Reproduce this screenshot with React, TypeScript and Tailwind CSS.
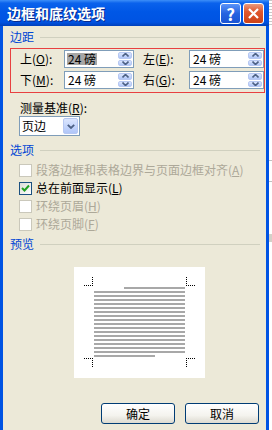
import React from "react";

const font = { fontFamily: '"Noto Sans CJK SC", "Noto Sans", sans-serif' };

function Spinner() {
  return (
    <div className="flex h-full w-[15px] flex-col gap-[1px] py-[1px] pr-[1px]">
      {[0, 1].map((i) => (
        <div
          key={i}
          className="flex flex-1 items-center justify-center rounded-[2px] border border-[#B7C8F2] bg-[linear-gradient(180deg,#DCE6FE_0%,#C1D3FB_60%,#B1C6F8_100%)]"
        >
          <svg width="7" height="4" viewBox="0 0 7 4">
            {i === 0 ? (
              <path d="M0.5 3.5 L3.5 0.5 L6.5 3.5" stroke="#4D6185" strokeWidth="1.6" fill="none" />
            ) : (
              <path d="M0.5 0.5 L3.5 3.5 L6.5 0.5" stroke="#4D6185" strokeWidth="1.6" fill="none" />
            )}
          </svg>
        </div>
      ))}
    </div>
  );
}

function SpinInput({ width, selected }: { width: string; selected?: boolean }) {
  return (
    <div className={`flex h-[18px] ${width} items-stretch border border-[#7F9DB9] bg-white`}>
      <div className="flex flex-1 items-center pl-[2px] text-[12px] leading-[12px] text-black">
        <span className={selected ? "bg-[#A6A6A6] px-[1px]" : "px-[1px]"}>24 磅</span>
      </div>
      <Spinner />
    </div>
  );
}

function Section({ title }: { title: string }) {
  return (
    <div className="flex h-[14px] items-start pl-[7px] pr-[6px]">
      <span className="text-[12px] leading-[14px] text-[#0046D5]">{title}</span>
      <div className="ml-[6px] mt-[7px] h-px flex-1 bg-[#D0D0BF]" />
    </div>
  );
}

function Check({ label, keyChar, checked, disabled }: { label: string; keyChar: string; checked?: boolean; disabled?: boolean }) {
  return (
    <div className="flex h-[18px] items-center pl-[16px]">
      <div
        className={`flex h-[13px] w-[13px] items-center justify-center border ${
          disabled ? "border-[#CAC8BB] bg-white" : "border-[#1C5180] bg-[linear-gradient(135deg,#DCDCD7_0%,#FFFFFF_100%)]"
        }`}
      >
        {checked && (
          <svg width="9" height="9" viewBox="0 0 9 9">
            <path d="M1 4 L3.5 6.5 L8 1.5" stroke="#21A121" strokeWidth="2" fill="none" />
          </svg>
        )}
      </div>
      <span className={`ml-[4px] text-[12px] leading-[14px] ${disabled ? "text-[#ACA899]" : "text-black"}`}>
        {label}(<u>{keyChar}</u>)
      </span>
    </div>
  );
}

function Preview() {
  const lines = Array.from({ length: 18 }, (_, i) => i);
  return (
    <svg width="131" height="111" viewBox="0 0 131 111">
      <rect width="131" height="111" fill="#FFFFFF" />
      {lines.map((i) => {
        const x1 = i === 0 ? 50 : 20;
        const x2 = i === 17 ? 81 : 111;
        return <rect key={i} x={x1} y={20 + i * 4} width={x2 - x1} height="2" fill="#A8A8A8" />;
      })}
      <g stroke="#000" strokeWidth="1" strokeDasharray="1 1" fill="none">
        <path d="M10 18.5 H19" />
        <path d="M18.5 10 V19" />
        <path d="M112 18.5 H121" />
        <path d="M112.5 10 V19" />
        <path d="M10 91.5 H19" />
        <path d="M18.5 91 V100" />
        <path d="M112 91.5 H121" />
        <path d="M112.5 91 V100" />
      </g>
    </svg>
  );
}

function XPButton({ label }: { label: string }) {
  return (
    <div className="flex h-[21px] w-[74px] items-center justify-center rounded-[3px] border border-[#003C74] bg-[linear-gradient(180deg,#FFFFFF_0%,#F4F3EE_60%,#DCDAD0_100%)] text-[12px] leading-[14px] text-black">
      {label}
    </div>
  );
}

export default function App() {
  return (
    <div className="flex h-[430px] w-[272px] overflow-hidden bg-white" style={font}>
      <div className="flex w-[269px] flex-col">
        {/* title bar */}
        <div className="flex h-[26px] items-center bg-[linear-gradient(180deg,#3D8FF8_0%,#0A62EC_12%,#0057E6_45%,#0053E2_85%,#0040BA_100%)] pl-[7px] pr-[5px]">
          <span className="flex-1 text-[14px] font-bold leading-[16px] text-white [text-shadow:1px_1px_#0A2A8A]">
            边框和底纹选项
          </span>
          <div className="flex h-[21px] w-[21px] items-center justify-center rounded-[3px] border border-white bg-[linear-gradient(180deg,#5A93F8_0%,#2663E0_50%,#1A55D4_100%)] text-[17px] font-bold leading-[17px] text-white">
            ?
          </div>
          <div className="ml-[2px] flex h-[21px] w-[21px] items-center justify-center rounded-[3px] border border-white bg-[linear-gradient(180deg,#E89A7E_0%,#E0572E_40%,#CC4217_100%)]">
            <svg width="13" height="13" viewBox="0 0 13 13">
              <path d="M2 2 L11 11 M11 2 L2 11" stroke="#FFFFFF" strokeWidth="2.2" />
            </svg>
          </div>
        </div>
        {/* body */}
        <div className="flex flex-1 flex-col border-x-[3px] border-[#0053E3] bg-[#ECE9D8]">
          <div className="mt-[4px]">
            <Section title="边距" />
          </div>
          <div className="mr-[1px] ml-[7px] mt-[4px] border border-[#E84040] pb-[3px] pt-[1px]">
            <div className="flex flex-col gap-[3px] pl-[9px]">
              {[
                ["上", "O", "左", "E"],
                ["下", "M", "右", "G"],
              ].map((r, i) => (
                <div key={i} className="flex items-center text-[12px] leading-[14px] text-black">
                  <span className="w-[44px]">
                    {r[0]}(<u>{r[1]}</u>):
                  </span>
                  <SpinInput width="w-[70px]" selected={i === 0} />
                  <span className="w-[55px] pl-[9px]">
                    {r[2]}(<u>{r[3]}</u>):
                  </span>
                  <SpinInput width="w-[75px]" />
                </div>
              ))}
            </div>
          </div>
          <div className="mt-[8px] pl-[17px] text-[12px] leading-[14px] text-black">
            测量基准(<u>R</u>):
          </div>
          <div className="ml-[16px] mt-[1px] flex h-[20px] w-[61px] items-stretch border border-[#7F9DB9] bg-white">
            <div className="flex flex-1 items-center pl-[2px] text-[12px] leading-[14px] text-black">页边</div>
            <div className="my-[1px] mr-[1px] flex w-[15px] items-center justify-center rounded-[2px] border border-[#B7C8F2] bg-[linear-gradient(180deg,#DCE6FE_0%,#C1D3FB_60%,#B1C6F8_100%)]">
              <svg width="8" height="5" viewBox="0 0 8 5">
                <path d="M0.8 0.8 L4 4 L7.2 0.8" stroke="#4D6185" strokeWidth="1.8" fill="none" />
              </svg>
            </div>
          </div>
          <div className="mt-[7px]">
            <Section title="选项" />
          </div>
          <div className="mt-[4px] flex flex-col">
            <Check label="段落边框和表格边界与页面边框对齐" keyChar="A" disabled />
            <Check label="总在前面显示" keyChar="L" checked />
            <Check label="环绕页眉" keyChar="H" disabled />
            <Check label="环绕页脚" keyChar="F" disabled />
          </div>
          <div className="mt-[4px]">
            <Section title="预览" />
          </div>
          <div className="ml-[71px] mt-[16px] flex">
            <Preview />
          </div>
          <div className="mt-[25px] flex justify-end gap-[10px] pr-[7px]">
            <XPButton label="确定" />
            <XPButton label="取消" />
          </div>
        </div>
      </div>
      {/* background window peeking at right */}
      <div className="flex w-[3px] flex-col bg-white">
        <div className="h-[26px] bg-[repeating-linear-gradient(180deg,#C8C8C8_0px,#C8C8C8_1px,#FFFFFF_1px,#FFFFFF_3px)]" />
        <div className="mt-[134px] h-px bg-[#C0C0C0]" />
        <div className="mt-[20px] h-px bg-[#C0C0C0]" />
        <div className="mt-[52px] h-[8px] bg-[#D4D0C8]" />
      </div>
    </div>
  );
}
